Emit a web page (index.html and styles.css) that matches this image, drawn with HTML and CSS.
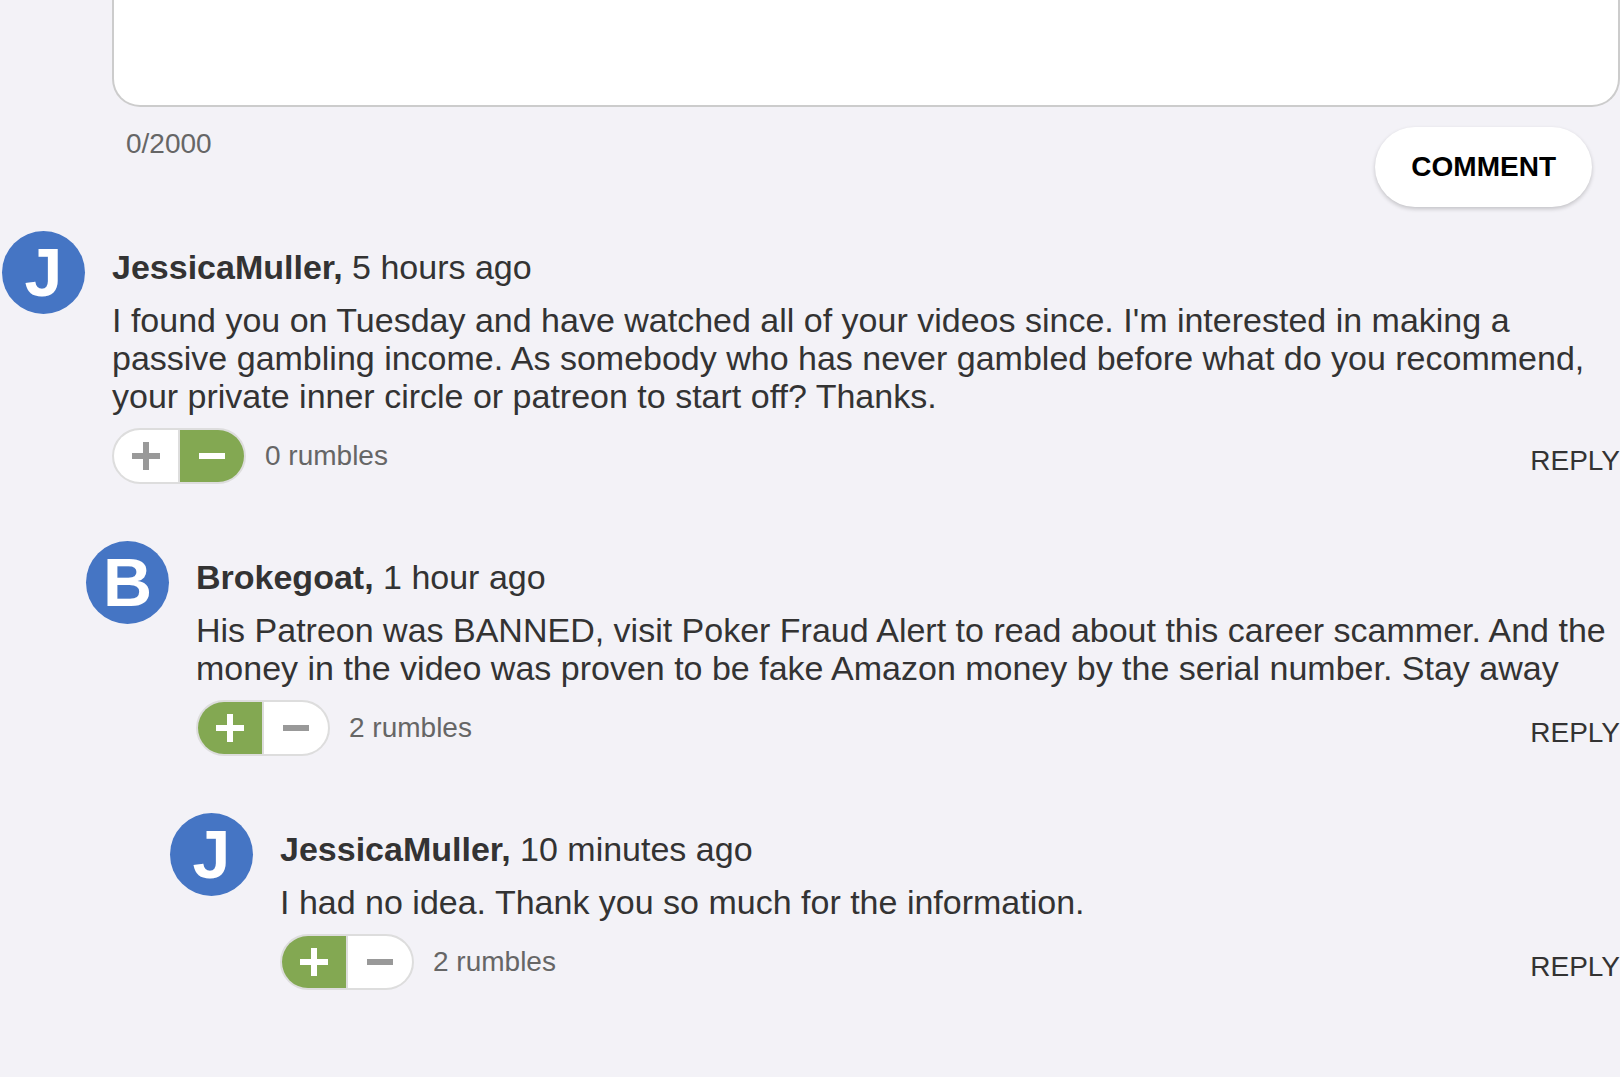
FILE: index.html
```html
<!DOCTYPE html>
<html lang="en">
<head>
  <meta charset="UTF-8" />
  <meta name="viewport" content="width=device-width, initial-scale=1.0"/>
  <title>Comments</title>
  <link rel="stylesheet" href="styles.css">
</head>
<body>
  <form class="comment-form">
    <textarea id="commentText" class="comment-input" maxlength="2000" aria-label="Add a comment"></textarea>
    <div class="form-footer">
      <label class="counter" for="commentText">0/2000</label>
      <button type="button" class="comment-btn">COMMENT</button>
    </div>
  </form>

  <ul class="comments">
    <li class="comment">
      <div class="comment-row">
        <div class="avatar">J</div>
        <div class="comment-body">
          <p class="meta"><a class="author" href="#">JessicaMuller,</a> 5 hours ago</p>
          <p class="text">I found you on Tuesday and have watched all of your videos since. I'm interested in making a passive gambling income. As somebody who has never gambled before what do you recommend, your private inner circle or patreon to start off? Thanks.</p>
          <div class="actions">
            <div class="votes">
              <button type="button" class="vote" aria-label="Rumble up"><svg width="28" height="28" viewBox="0 0 28 28"><path d="M11 0h6v11h11v6H17v11h-6V17H0v-6h11z"/></svg></button>
              <button type="button" class="vote active" aria-label="Rumble down"><svg width="28" height="28" viewBox="0 0 28 28"><path d="M1 11h26v6H1z"/></svg></button>
            </div>
            <span class="score">0 rumbles</span>
            <a class="reply" href="#">REPLY</a>
          </div>
        </div>
      </div>

      <ul class="replies">
        <li class="comment">
          <div class="comment-row">
            <div class="avatar">B</div>
            <div class="comment-body">
              <p class="meta"><a class="author" href="#">Brokegoat,</a> 1 hour ago</p>
              <p class="text">His Patreon was BANNED, visit Poker Fraud Alert to read about this career scammer. And the money in the video was proven to be fake Amazon money by the serial number. Stay away</p>
              <div class="actions">
                <div class="votes">
                  <button type="button" class="vote active" aria-label="Rumble up"><svg width="28" height="28" viewBox="0 0 28 28"><path d="M11 0h6v11h11v6H17v11h-6V17H0v-6h11z"/></svg></button>
                  <button type="button" class="vote" aria-label="Rumble down"><svg width="28" height="28" viewBox="0 0 28 28"><path d="M1 11h26v6H1z"/></svg></button>
                </div>
                <span class="score">2 rumbles</span>
                <a class="reply" href="#">REPLY</a>
              </div>
            </div>
          </div>

          <ul class="replies">
            <li class="comment">
              <div class="comment-row">
                <div class="avatar">J</div>
                <div class="comment-body">
                  <p class="meta"><a class="author" href="#">JessicaMuller,</a> 10 minutes ago</p>
                  <p class="text">I had no idea. Thank you so much for the information.</p>
                  <div class="actions">
                    <div class="votes">
                      <button type="button" class="vote active" aria-label="Rumble up"><svg width="28" height="28" viewBox="0 0 28 28"><path d="M11 0h6v11h11v6H17v11h-6V17H0v-6h11z"/></svg></button>
                      <button type="button" class="vote" aria-label="Rumble down"><svg width="28" height="28" viewBox="0 0 28 28"><path d="M1 11h26v6H1z"/></svg></button>
                    </div>
                    <span class="score">2 rumbles</span>
                    <a class="reply" href="#">REPLY</a>
                  </div>
                </div>
              </div>
            </li>
          </ul>
        </li>
      </ul>
    </li>
  </ul>
</body>
</html>
```
FILE: styles.css
```css
* {
  box-sizing: border-box;
}

body {
  font-family: "Liberation Sans", Helvetica, Arial, sans-serif;
  font-size: 34px;
  line-height: 38px;
  background: #f3f2f7;
  color: #333;
  margin: 0;
}

a {
  color: inherit;
  text-decoration: none;
}

button {
  font-family: inherit;
  border: none;
  padding: 0;
  cursor: pointer;
}

.comment-form {
  padding-left: 112px;
}

.comment-input {
  display: block;
  width: 100%;
  height: 107px;
  padding: 14px 28px;
  font: inherit;
  color: inherit;
  background: #fff;
  border: 2px solid #ccc;
  border-top: none;
  border-radius: 0 0 28px 28px;
  resize: none;
  outline: none;
}

.form-footer {
  display: flex;
  justify-content: space-between;
  align-items: flex-start;
  padding: 20px 28px 24px 14px;
}

.counter {
  font-size: 28px;
  line-height: 34px;
  color: #666;
}

.comment-btn {
  height: 80px;
  padding: 0 36px;
  border-radius: 40px;
  background: #fff;
  color: #000;
  font-size: 28px;
  font-weight: bold;
  box-shadow: 0 2px 4px rgba(0, 0, 0, 0.2);
}

.comments,
.replies {
  list-style: none;
  margin: 0;
  padding: 0;
}

.comments {
  padding-left: 2px;
}

.replies {
  padding: 57px 0 0 84px;
}

.comment-row {
  display: flex;
  gap: 27px;
}

.avatar {
  flex: none;
  width: 83px;
  height: 83px;
  border-radius: 50%;
  background: #4575c4;
  color: #fff;
  font-size: 68px;
  font-weight: bold;
  line-height: 83px;
  text-align: center;
}

.comment-body {
  flex: 1;
  padding-top: 17px;
}

.meta {
  margin: 0 0 15px;
}

.author {
  font-weight: bold;
}

.text {
  margin: 0 0 13px;
}

.actions {
  display: flex;
  align-items: center;
}

.votes {
  display: flex;
  gap: 2px;
  border: 2px solid #ddd;
  border-radius: 28px;
  background: #ddd;
  overflow: hidden;
}

.vote {
  display: flex;
  align-items: center;
  justify-content: center;
  width: 64px;
  height: 52px;
  background: #fff;
  fill: #999;
}

.vote.active {
  background: #83a852;
  fill: #fff;
}

.score {
  margin-left: 19px;
  font-size: 28px;
  color: #666;
}

.reply {
  margin-left: auto;
  padding-top: 10px;
  font-size: 28px;
}
```
